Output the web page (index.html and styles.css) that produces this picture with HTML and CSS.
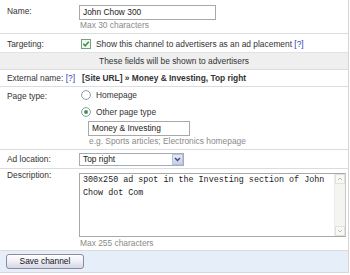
FILE: index.html
```html
<!DOCTYPE html>
<html>
<head>
<meta charset="utf-8">
<link rel="stylesheet" href="styles.css">
</head>
<body>
<div class="form">
  <div class="row r-name">
    <div class="label">Name:</div>
    <div class="value">
      <div class="field name-field">John Chow 300</div>
      <div class="hint">Max 30 characters</div>
    </div>
  </div>
  <div class="row r-target">
    <div class="label">Targeting:</div>
    <div class="value check-line">
      <svg class="checkbox" width="10" height="10" viewBox="0 0 10 10"><rect x="0.5" y="0.5" width="9" height="9" fill="#f3f8f2" stroke="#7d9a86"/><path d="M2.3 4.8 L4.2 6.8 L7.8 2.8" fill="none" stroke="#2f9a34" stroke-width="1.5"/></svg>
      <span>Show this channel to advertisers as an ad placement <a class="help">[?]</a></span>
    </div>
  </div>
  <div class="band">These fields will be shown to advertisers</div>
  <div class="row r-ext">
    <div class="label">External name: <a class="help">[?]</a></div>
    <div class="value ext-name">[Site URL] » Money &amp; Investing, Top right</div>
  </div>
  <div class="row r-page">
    <div class="label">Page type:</div>
    <div class="value">
      <div class="radio-line">
        <svg class="radio" width="10" height="10" viewBox="0 0 10 10"><circle cx="5" cy="5" r="4.4" fill="#fff" stroke="#8d9aa6"/></svg>
        <span>Homepage</span>
      </div>
      <div class="radio-line second">
        <svg class="radio" width="10" height="10" viewBox="0 0 10 10"><circle cx="5" cy="5" r="4.4" fill="#fff" stroke="#8d9aa6"/><circle cx="5" cy="5" r="2" fill="#3f9f48"/></svg>
        <span>Other page type</span>
      </div>
      <div class="field page-field">Money &amp; Investing</div>
      <div class="hint page-hint">e.g. Sports articles; Electronics homepage</div>
    </div>
  </div>
  <div class="row r-loc">
    <div class="label">Ad location:</div>
    <div class="value">
      <div class="select">
        <span class="select-text">Top right</span>
        <span class="select-btn"><svg width="7" height="5" viewBox="0 0 7 5"><path d="M1 1 L3.5 3.5 L6 1" fill="none" stroke="#3d4d75" stroke-width="1.4"/></svg></span>
      </div>
    </div>
  </div>
  <div class="row r-desc">
    <div class="label">Description:</div>
    <div class="value">
      <div class="textarea">
        <div class="ta-text">
          <div class="ta-line">300x250 ad spot in the Investing section of John</div>
          <div class="ta-line">Chow dot Com</div>
        </div>
        <div class="scrollbar">
          <span class="sb-btn"><svg width="6" height="4" viewBox="0 0 6 4"><path d="M1 3 L3 1 L5 3" fill="none" stroke="#b9c2b0" stroke-width="1"/></svg></span>
          <span class="sb-btn"><svg width="6" height="4" viewBox="0 0 6 4"><path d="M1 1 L3 3 L5 1" fill="none" stroke="#b9c2b0" stroke-width="1"/></svg></span>
        </div>
      </div>
      <div class="hint">Max 255 characters</div>
    </div>
  </div>
  <div class="actions">
    <div class="button">Save channel</div>
  </div>
</div>
</body>
</html>
```
FILE: styles.css
```css
html, body {
  margin: 0;
  padding: 0;
  background: #fff;
}
body {
  font-family: "Liberation Sans", Arial, sans-serif;
  font-size: 8.4px;
  color: #333;
}
.form {
  width: 348px;
  border-right: 1px solid #d4d4d4;
}
.row {
  display: grid;
  grid-template-columns: 79px 1fr;
  border-bottom: 1px solid #dcdcdc;
}
.label {
  padding-left: 7px;
  line-height: 10px;
  white-space: nowrap;
}
.value {
  line-height: 10px;
}
.help {
  color: #2a3cb8;
}
.hint {
  color: #8a8a8a;
  padding-left: 1px;
  line-height: 10px;
}
.field {
  box-sizing: border-box;
  border: 1px solid #a8a8a8;
  height: 15px;
  line-height: 13px;
  padding-left: 3px;
  color: #222;
  background: #fff;
}

/* name */
.r-name { height: 33px; }
.r-name .label { padding-top: 6px; }
.r-name .value { padding-top: 5px; }
.name-field { width: 137px; }

/* targeting */
.r-target { height: 18px; border-bottom-color: #e2e2e2; }
.r-target .label { padding-top: 5px; }
.check-line {
  display: flex;
  align-items: center;
  gap: 5px;
  padding-left: 2px;
  padding-top: 4px;
  height: 12px;
}
.checkbox { flex: none; }

/* band */
.band {
  background: #efefef;
  height: 16px;
  line-height: 16px;
  text-align: center;
  border-bottom: 1px solid #dcdcdc;
  color: #333;
}

/* external name */
.r-ext { height: 16px; }
.r-ext .label, .r-ext .value { padding-top: 3px; }
.ext-name {
  font-weight: bold;
  padding-left: 3px;
  color: #333;
}

/* page type */
.r-page { height: 62px; }
.r-page .label { padding-top: 4px; }
.r-page .value { padding-top: 3px; }
.radio-line {
  display: flex;
  align-items: center;
  gap: 5px;
  padding-left: 2px;
  height: 10px;
}
.radio-line.second { margin-top: 7px; }
.radio { flex: none; }
.page-field {
  margin-top: 4px;
  margin-left: 9px;
  width: 102px;
}
.page-hint { padding-left: 10px; }

/* ad location */
.r-loc { height: 18px; }
.r-loc .label { padding-top: 4px; }
.r-loc .value { padding-top: 3px; }
.select {
  box-sizing: border-box;
  width: 105px;
  height: 13px;
  border: 1px solid #a5acb5;
  display: flex;
  align-items: stretch;
  background: #fff;
}
.select-text {
  flex: 1;
  line-height: 11px;
  padding-left: 3px;
  color: #222;
}
.select-btn {
  width: 11px;
  background: linear-gradient(#e4eaf6, #c4d0ea);
  border: 1px solid #b8c4dc;
  box-sizing: border-box;
  display: flex;
  align-items: center;
  justify-content: center;
}

/* description */
.r-desc { height: 81px; }
.r-desc .label { padding-top: 1px; }
.r-desc .value { padding-top: 4px; }
.textarea {
  box-sizing: border-box;
  width: 267px;
  height: 64px;
  border: 1px solid #a8a8a8;
  border-right-color: #c8c8c8;
  display: flex;
  background: #fff;
}
.ta-text {
  flex: 1;
  min-width: 0;
  overflow: hidden;
  font-family: "Liberation Mono", "Courier New", monospace;
  font-size: 8.4px;
  line-height: 13px;
  padding: 0 0 0 3px;
  color: #222;
}
.ta-line {
  white-space: nowrap;
}
.scrollbar {
  width: 10px;
  background: #f4f4f0;
  display: flex;
  flex-direction: column;
  justify-content: space-between;
  border-left: 1px solid #ececec;
}
.sb-btn {
  height: 10px;
  display: flex;
  align-items: center;
  justify-content: center;
  background: #f7f8f4;
  border: 1px solid #e0e3d8;
  box-sizing: border-box;
}
.r-desc .hint { padding-top: 1px; }

/* actions */
.actions {
  background: #e6eef9;
  border-bottom: 1px solid #d0d8e4;
  padding-left: 6px;
  padding-top: 3px;
  box-sizing: border-box;
  height: 22px;
}
.button {
  box-sizing: border-box;
  width: 78px;
  height: 15px;
  border: 1px solid #8b8b9c;
  border-radius: 3px;
  background: linear-gradient(#ffffff, #ececf4 55%, #d6d6e6);
  text-align: center;
  line-height: 13px;
  color: #111;
}
```
